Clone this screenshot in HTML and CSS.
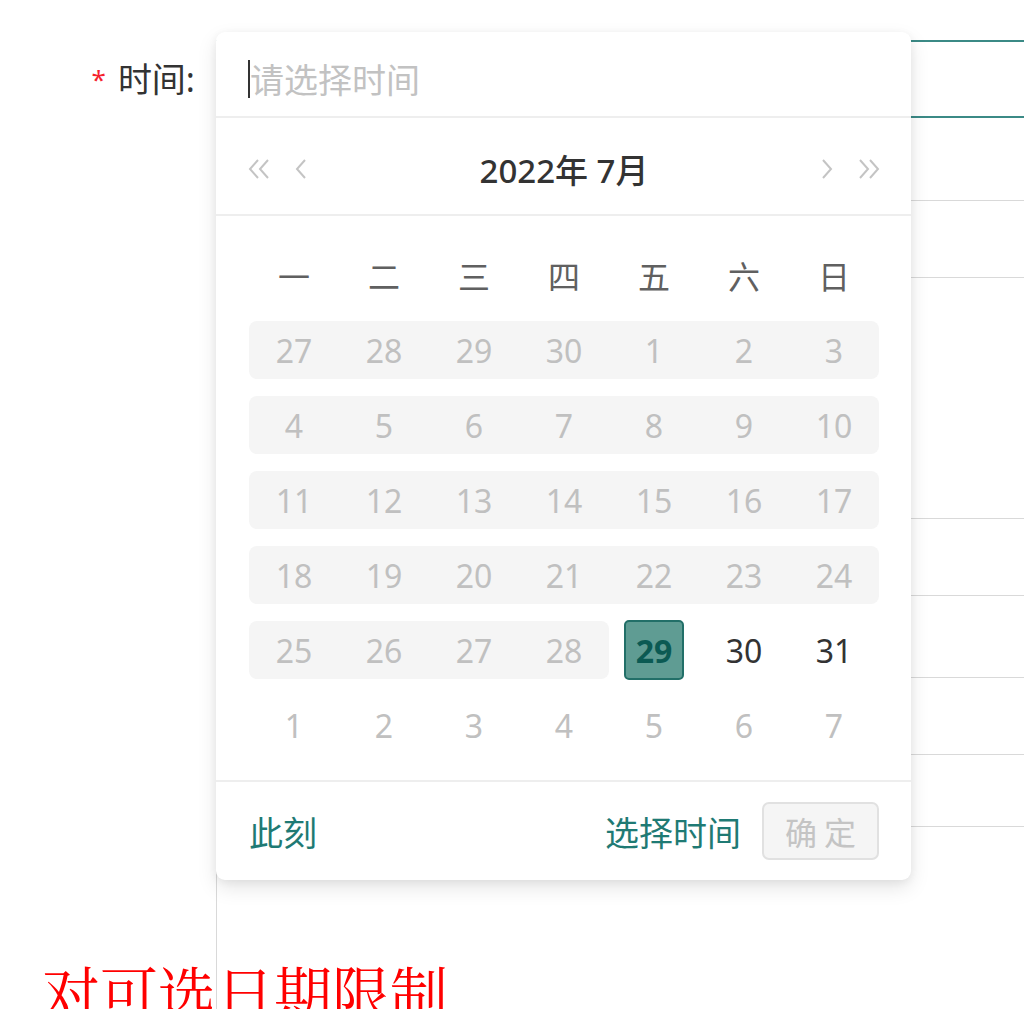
FILE: index.html
```html
<!DOCTYPE html>
<html>
<head>
 <meta http-equiv="content-type" content="text/html; charset=utf-8" />
 <title>时间选择</title>
 <link rel="stylesheet" href="styles.css">
</head>
<body>
 <div class="form">
  <div class="form-row r1">
   <label class="form-label"><span class="req">*</span>时间:</label>
   <div class="field focus"></div>
  </div>
  <div class="form-row r2">
   <div class="form-label"></div>
   <div class="field"></div>
  </div>
  <div class="form-row r3">
   <div class="form-label"></div>
   <div class="field"></div>
  </div>
  <div class="form-row r4">
   <div class="form-label"></div>
   <div class="field"></div>
  </div>
  <div class="form-row r5">
   <div class="form-label"><h2 class="note">对可选日期限制</h2></div>
   <div class="field area"></div>
  </div>
 </div>

 <div class="picker">
  <div class="picker-input">
   <span class="caret"></span>
   <span class="placeholder">请选择时间</span>
  </div>
  <div class="picker-head">
   <div class="nav">
    <svg width="24" height="22" viewBox="0 0 24 22"><path d="M11 2 L3 11 L11 20 M21 2 L13 11 L21 20" fill="none" stroke="#c4c4c4" stroke-width="2"/></svg>
    <svg width="12" height="22" viewBox="0 0 12 22"><path d="M10 2 L2 11 L10 20" fill="none" stroke="#c4c4c4" stroke-width="2"/></svg>
   </div>
   <div class="title">2022年 7月</div>
   <div class="nav">
    <svg width="12" height="22" viewBox="0 0 12 22"><path d="M2 2 L10 11 L2 20" fill="none" stroke="#c4c4c4" stroke-width="2"/></svg>
    <svg width="24" height="22" viewBox="0 0 24 22"><path d="M3 2 L11 11 L3 20 M13 2 L21 11 L13 20" fill="none" stroke="#c4c4c4" stroke-width="2"/></svg>
   </div>
  </div>
  <div class="picker-body">
   <div class="week">一</div><div class="week">二</div><div class="week">三</div><div class="week">四</div><div class="week">五</div><div class="week">六</div><div class="week">日</div>

   <div class="cell off first">27</div><div class="cell off">28</div><div class="cell off">29</div><div class="cell off">30</div><div class="cell off">1</div><div class="cell off">2</div><div class="cell off last">3</div>
   <div class="cell off first">4</div><div class="cell off">5</div><div class="cell off">6</div><div class="cell off">7</div><div class="cell off">8</div><div class="cell off">9</div><div class="cell off last">10</div>
   <div class="cell off first">11</div><div class="cell off">12</div><div class="cell off">13</div><div class="cell off">14</div><div class="cell off">15</div><div class="cell off">16</div><div class="cell off last">17</div>
   <div class="cell off first">18</div><div class="cell off">19</div><div class="cell off">20</div><div class="cell off">21</div><div class="cell off">22</div><div class="cell off">23</div><div class="cell off last">24</div>
   <div class="cell off first">25</div><div class="cell off">26</div><div class="cell off">27</div><div class="cell off last">28</div><div class="cell"><span class="today">29</span></div><div class="cell">30</div><div class="cell">31</div>
   <div class="cell next">1</div><div class="cell next">2</div><div class="cell next">3</div><div class="cell next">4</div><div class="cell next">5</div><div class="cell next">6</div><div class="cell next">7</div>
  </div>
  <div class="picker-foot">
   <a class="link">此刻</a>
   <div class="foot-right">
    <a class="link">选择时间</a>
    <button class="ok" disabled>确 定</button>
   </div>
  </div>
 </div>
</body>
</html>
```

FILE: styles.css
```css
* {
 box-sizing: border-box;
 margin: 0;
 padding: 0;
}
body {
 font-family: "Noto Sans", "Noto Sans CJK SC", sans-serif;
 background: #fff;
 color: #333;
 width: 1024px;
 height: 1009px;
 overflow: hidden;
 position: relative;
}
.form {
 padding-top: 40px;
}
.form-row {
 display: flex;
}
.r2 { margin-top: 82px; }
.r3 { margin-top: 240px; }
.r4 { margin-top: 81px; }
.r5 { margin-top: 71px; }
.form-label {
 width: 216px;
 height: 78px;
 flex: none;
 text-align: right;
 padding-right: 21px;
 font-size: 34px;
 line-height: 78px;
 color: #333;
 white-space: nowrap;
}
.req {
 color: #f5222d;
 font-size: 26px;
 line-height: 1;
 margin-right: 12px;
 position: relative;
 top: -3px;
}
.field {
 width: 900px;
 height: 78px;
 flex: none;
 border: 1px solid #d9d9d9;
}
.field.focus {
 border: 2px solid #3b8a86;
}
.field.area {
 height: 300px;
}
.note {
 text-align: left;
 padding-left: 42px;
 margin-top: 135px;
 font-family: "Noto Serif CJK SC", "Noto Sans CJK SC", serif;
 font-weight: normal;
 font-size: 58px;
 line-height: 58px;
 color: #f00;
}

/* date picker popup */
.picker {
 position: absolute;
 left: 216px;
 top: 32px;
 width: 695px;
 height: 848px;
 background: #fff;
 border-radius: 9px;
 box-shadow: 0 8px 20px rgba(0, 0, 0, 0.10), 0 2px 8px rgba(0, 0, 0, 0.06);
 display: flex;
 flex-direction: column;
}
.picker-input {
 height: 86px;
 border-bottom: 2px solid #eeeeee;
 display: flex;
 align-items: center;
 padding: 10px 0 0 32px;
}
.caret {
 width: 2px;
 height: 38px;
 background: #333;
}
.placeholder {
 font-size: 34px;
 color: #c2c2c2;
 font-family: "Noto Sans CJK SC", sans-serif;
 line-height: 1;
}
.picker-head {
 height: 98px;
 border-bottom: 2px solid #eeeeee;
 display: flex;
 align-items: center;
 justify-content: space-between;
 padding: 5px 30px 0 31px;
}
.nav {
 display: flex;
 align-items: center;
 gap: 24px;
 width: 100px;
}
.nav:last-child {
 justify-content: flex-end;
}
.title {
 font-size: 33px;
 font-weight: 500;
 color: #333;
}
.picker-body {
 display: grid;
 grid-template-columns: repeat(7, 90px);
 grid-auto-rows: 58px;
 row-gap: 17px;
 padding: 30px 0 0 33px;
 height: 566px;
 border-bottom: 2px solid #eeeeee;
}
.week {
 display: flex;
 align-items: center;
 justify-content: center;
 font-size: 32px;
 color: #606060;
 font-family: "Noto Sans CJK SC", sans-serif;
}
.cell {
 display: flex;
 align-items: center;
 justify-content: center;
 font-size: 32px;
 color: #333;
}
.cell.off {
 background: #f5f5f5;
 color: #c0c0c0;
}
.cell.first {
 border-radius: 8px 0 0 8px;
}
.cell.last {
 border-radius: 0 8px 8px 0;
}
.cell.next {
 color: #c0c0c0;
}
.today {
 width: 60px;
 height: 60px;
 display: flex;
 align-items: center;
 justify-content: center;
 background: #5f9c93;
 border: 2px solid #226f68;
 border-radius: 5px;
 color: #0b5a53;
 font-weight: 700;
}
.picker-foot {
 flex: 1;
 display: flex;
 align-items: center;
 justify-content: space-between;
 padding: 0 32px 0 33px;
}
.link {
 font-size: 34px;
 color: #1f7a74;
 font-family: "Noto Sans CJK SC", sans-serif;
}
.foot-right {
 display: flex;
 align-items: center;
 gap: 21px;
}
.ok {
 width: 117px;
 height: 58px;
 border: 2px solid #e1e1e1;
 border-radius: 7px;
 background: #f5f5f5;
 color: #c4c4c4;
 font-size: 32px;
 font-family: "Noto Sans CJK SC", sans-serif;
}
```
